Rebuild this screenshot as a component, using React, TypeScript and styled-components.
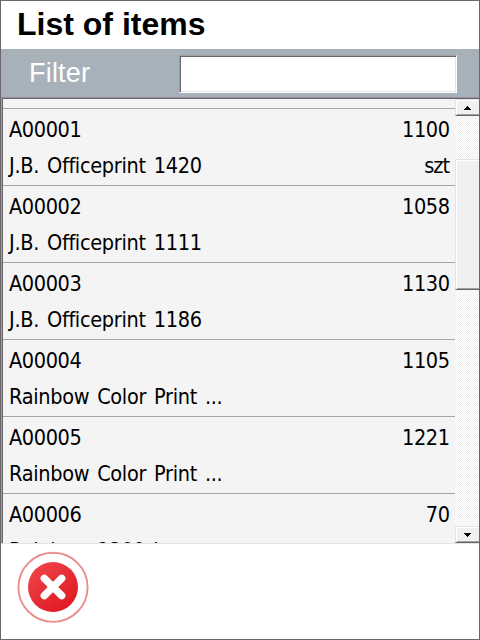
import React from "react";
import styled, { createGlobalStyle } from "styled-components";

const Global = createGlobalStyle`
  * { box-sizing: border-box; }
  body { margin: 0; background: #fff; }
`;

const Frame = styled.div`
  width: 480px;
  height: 640px;
  border: 1px solid #696569;
  background: #fff;
  display: flex;
  flex-direction: column;
  overflow: hidden;
  color: #000;
`;

const Title = styled.h1`
  margin: 0;
  height: 48px;
  flex: none;
  padding-left: 16px;
  font: bold 32px/46px "Liberation Sans", Arial, sans-serif;
`;

const FilterBar = styled.div`
  height: 48px;
  flex: none;
  display: flex;
  align-items: flex-start;
  justify-content: space-between;
  padding: 6px 22px 0 28px;
  background: #a7b1b9;
`;

const FilterLabel = styled.label`
  color: #fff;
  font: 27px/36px "Liberation Sans", Arial, sans-serif;
  letter-spacing: 0.2px;
`;

const FilterInput = styled.input`
  width: 278px;
  height: 38px;
  padding: 0 6px;
  background: #fff;
  border: 1px solid;
  border-color: #a09da0 #fff #fff #a09da0;
  border-radius: 0;
  box-shadow: inset 1px 1px #696569, inset -1px -1px #e3e3e3;
  outline: none;
`;

const ListBox = styled.div`
  height: 447px;
  flex: none;
  display: flex;
  border-left: 1px solid #a09da0;
  border-top: 1px solid #969498;
  border-bottom: 1px solid #e3e3e3;
`;

const Rows = styled.div`
  flex: 1;
  min-width: 0;
  overflow: hidden;
  background: #f4f4f4;
  border-left: 1px solid #696569;
  border-top: 1px solid #696569;
  padding-top: 9px;
`;

const Row = styled.div`
  height: 77px;
  border-top: 1px solid #a5a5a5;
  padding: 3px 5px 0 6px;
`;

const Line = styled.div`
  height: 36px;
  display: flex;
  justify-content: space-between;
  white-space: pre;
  font: 21.5px/36px "DejaVu Sans Condensed", "DejaVu Sans", Tahoma, sans-serif;
  font-stretch: condensed;
`;

const Cell = styled.span<{ $spacing: number }>`
  letter-spacing: ${(p) => p.$spacing}px;
  word-spacing: 2.2px;
  margin-right: ${(p) => -p.$spacing}px;
`;

const ScrollBar = styled.div`
  width: 24px;
  flex: none;
  display: flex;
  flex-direction: column;
  border-top: 1px solid #696569;
  background: repeating-conic-gradient(#fff 0 25%, #efefef 0 50%) 0 0 / 2px 2px;
`;

const Raised = styled.div`
  background: #f0f0f0;
  border: 1px solid;
  border-color: #e3e3e3 #f0f0f0 #696569 #e3e3e3;
  border-right: 0;
  box-shadow: inset 1px 1px #fff, inset 0 -1px #a0a0a0;
`;

const ArrowButton = styled(Raised)`
  height: 17px;
  flex: none;
  display: flex;
  align-items: center;
  justify-content: center;
`;

const Thumb = styled(Raised)`
  height: 131px;
  margin: 43px 0 auto;
`;

const Footer = styled.div`
  flex: 1;
  padding: 7px 0 0 16px;
`;

const CloseButton = styled.button`
  display: block;
  width: 72px;
  height: 72px;
  padding: 0;
  border: 0;
  background: none;
`;

const items = [
  { code: "A00001", name: "J.B. Officeprint 1420", qty: "1100", unit: "szt" },
  { code: "A00002", name: "J.B. Officeprint 1111", qty: "1058", unit: "" },
  { code: "A00003", name: "J.B. Officeprint 1186", qty: "1130", unit: "" },
  { code: "A00004", name: "Rainbow Color Print ...", qty: "1105", unit: "" },
  { code: "A00005", name: "Rainbow Color Print ...", qty: "1221", unit: "" },
  { code: "A00006", name: "Rainbow 1200 i", qty: "70", unit: "" },
];

const Arrow = ({ down = false }: { down?: boolean }) => (
  <svg width="7" height="4" viewBox="0 0 7 4" shapeRendering="crispEdges">
    <path d={down ? "M0 0h7v1H0zM1 1h5v1H1zM2 2h3v1H2zM3 3h1v1H3z" : "M3 0h1v1H3zM2 1h3v1H2zM1 2h5v1H1zM0 3h7v1H0z"} />
  </svg>
);

export default function App() {
  return (
    <>
      <Global />
      <Frame>
        <Title>List of items</Title>
        <FilterBar>
          <FilterLabel htmlFor="filter">Filter</FilterLabel>
          <FilterInput id="filter" />
        </FilterBar>
        <ListBox>
          <Rows>
            {items.map((item) => (
              <Row key={item.code}>
                <Line>
                  <Cell $spacing={-0.4}>{item.code}</Cell>
                  <Cell $spacing={-0.4}>{item.qty}</Cell>
                </Line>
                <Line>
                  <Cell $spacing={-0.32}>{item.name}</Cell>
                  <Cell $spacing={-1}>{item.unit}</Cell>
                </Line>
              </Row>
            ))}
          </Rows>
          <ScrollBar>
            <ArrowButton><Arrow /></ArrowButton>
            <Thumb />
            <ArrowButton><Arrow down /></ArrowButton>
          </ScrollBar>
        </ListBox>
        <Footer>
          <CloseButton aria-label="Close">
            <svg width="72" height="72" viewBox="0 0 72 72">
              <defs>
                <linearGradient id="red" x1="0.15" y1="0.1" x2="0.75" y2="0.9">
                  <stop offset="0" stopColor="#ee4248" />
                  <stop offset="1" stopColor="#e01c24" />
                </linearGradient>
              </defs>
              <circle cx="36" cy="36.3" r="34.6" fill="none" stroke="#ec8d90" strokeWidth="1.9" />
              <circle cx="36" cy="36" r="25" fill="url(#red)" />
              <path d="M27.3 27.3L44.7 44.7M44.7 27.3L27.3 44.7" stroke="#fff" strokeWidth="7.4" strokeLinecap="round" />
            </svg>
          </CloseButton>
        </Footer>
      </Frame>
    </>
  );
}
